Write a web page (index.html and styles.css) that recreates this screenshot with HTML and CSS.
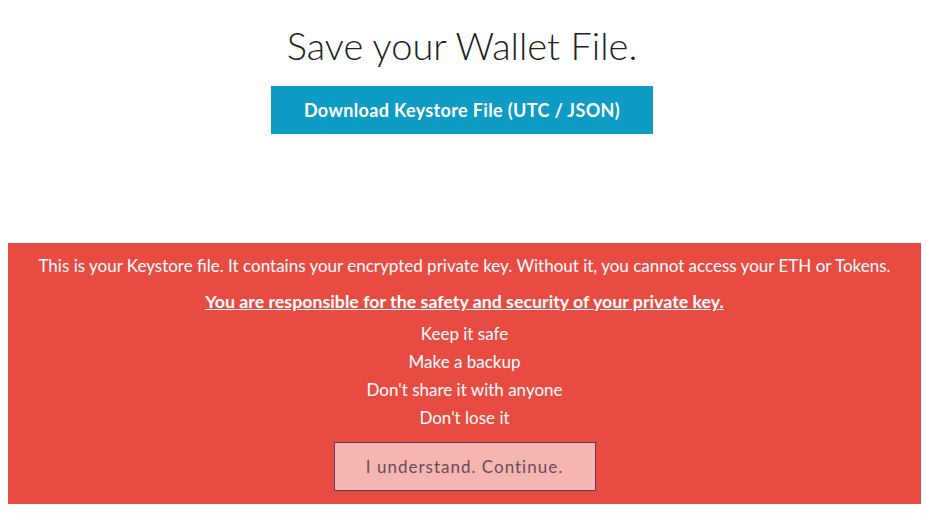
FILE: index.html
```html
<!DOCTYPE html>
<html lang="en">
<head>
  <meta charset="UTF-8">
  <title>Save your Wallet File</title>
  <link rel="stylesheet" href="styles.css">
</head>
<body>

  <section class="save">
    <h1>Save your Wallet File.</h1>
    <a class="btn-download" href="#">Download Keystore File (UTC / JSON)</a>
  </section>

  <section class="warning">
    <p>This is your Keystore file. It contains your encrypted private key. Without it, you cannot access your ETH or Tokens.</p>
    <p class="strong"><u>You are responsible for the safety and security of your private key.</u></p>
    <ul>
      <li>Keep it safe</li>
      <li>Make a backup</li>
      <li>Don't share it with anyone</li>
      <li>Don't lose it</li>
    </ul>
    <button type="button" class="btn-continue">I understand. Continue.</button>
  </section>

</body>
</html>
```

FILE: styles.css
```css
body {
  margin: 0;
  padding: 0 5px 0 8px;
  font-family: Lato, "Open Sans", sans-serif;
  background: #fff;
  color: #333;
}

.save {
  text-align: center;
  padding: 21px 5px 0 0;
  height: 243px;
  box-sizing: border-box;
}

.save h1 {
  margin: 0 0 16px;
  font-size: 38px;
  font-weight: 300;
  line-height: 49px;
  color: #222;
}

.btn-download {
  display: inline-block;
  width: 382px;
  height: 48px;
  line-height: 48px;
  background-color: #0e9bc4;
  color: #fff;
  font-size: 18px;
  font-weight: 700;
  text-decoration: none;
  letter-spacing: 0.35px;
}

.warning {
  background-color: #e84b42;
  color: #fff;
  text-align: center;
  padding: 11px 0 13px;
  font-size: 17px;
}

.warning p {
  margin: 0 0 11px;
  line-height: 24px;
}

.warning .strong {
  font-size: 17.8px;
  font-weight: 700;
  margin-bottom: 7px;
}

.warning ul {
  list-style: none;
  margin: 0 0 10px;
  padding: 0;
}

.warning li {
  line-height: 28px;
}

.btn-continue {
  width: 262px;
  height: 49px;
  background-color: #f5b6b2;
  border: 1px solid #5b3d5c;
  color: #6a4a5c;
  font-family: Lato, sans-serif;
  font-size: 17px;
  letter-spacing: 1px;
  cursor: pointer;
}
```
